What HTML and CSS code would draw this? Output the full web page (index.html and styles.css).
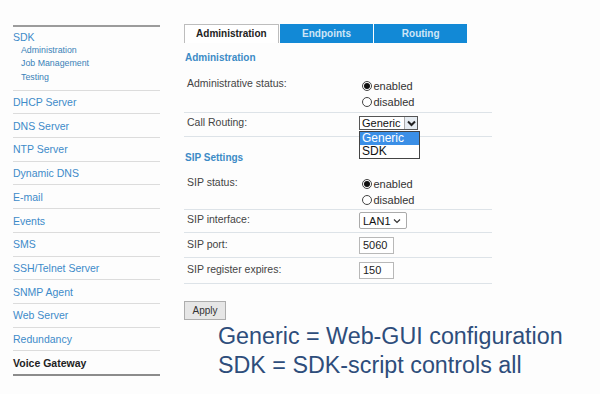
FILE: index.html
```html
<!DOCTYPE html>
<html lang="en">
<head>
    <meta charset="UTF-8">
    <title>Voice Gateway</title>
    <link rel="stylesheet" href="styles.css">
</head>
<body>
    <div class="page">
        <ul class="nav">
            <li class="nav-group">
                <a class="nav-link">SDK</a>
                <a class="nav-sub">Administration</a>
                <a class="nav-sub">Job Management</a>
                <a class="nav-sub">Testing</a>
            </li>
            <li class="nav-item"><a class="nav-link">DHCP Server</a></li>
            <li class="nav-item"><a class="nav-link">DNS Server</a></li>
            <li class="nav-item"><a class="nav-link">NTP Server</a></li>
            <li class="nav-item"><a class="nav-link">Dynamic DNS</a></li>
            <li class="nav-item"><a class="nav-link">E-mail</a></li>
            <li class="nav-item"><a class="nav-link">Events</a></li>
            <li class="nav-item"><a class="nav-link">SMS</a></li>
            <li class="nav-item"><a class="nav-link">SSH/Telnet Server</a></li>
            <li class="nav-item"><a class="nav-link">SNMP Agent</a></li>
            <li class="nav-item"><a class="nav-link">Web Server</a></li>
            <li class="nav-item"><a class="nav-link">Redundancy</a></li>
            <li class="nav-item nav-last"><a class="nav-link nav-current">Voice Gateway</a></li>
        </ul>

        <div class="main">
            <div class="tabs">
                <div class="tab tab-active">Administration</div>
                <div class="tab">Endpoints</div>
                <div class="tab">Routing</div>
            </div>

            <h3 class="section">Administration</h3>
            <div class="row row-admin">
                <div class="label">Administrative status:</div>
                <div class="value radios">
                    <div class="radio-line"><span class="radio checked"></span>enabled</div>
                    <div class="radio-line"><span class="radio"></span>disabled</div>
                </div>
            </div>
            <div class="row row-routing">
                <div class="label">Call Routing:</div>
                <div class="value">
                    <div class="select-open">
                        <span class="select-text">Generic</span>
                        <span class="select-btn">
                            <svg width="9" height="7" viewBox="0 0 9 7"><path d="M1 1.5 L4.5 5 L8 1.5" fill="none" stroke="#222" stroke-width="2"/></svg>
                        </span>
                    </div>
                    <ul class="dropdown">
                        <li class="option option-hl">Generic</li>
                        <li class="option">SDK</li>
                    </ul>
                </div>
            </div>

            <h3 class="section section-sip">SIP Settings</h3>
            <div class="row row-status">
                <div class="label">SIP status:</div>
                <div class="value radios">
                    <div class="radio-line"><span class="radio checked"></span>enabled</div>
                    <div class="radio-line"><span class="radio"></span>disabled</div>
                </div>
            </div>
            <div class="row row-iface">
                <div class="label">SIP interface:</div>
                <div class="value">
                    <div class="select">
                        <span>LAN1</span>
                        <svg width="8" height="6" viewBox="0 0 8 6"><path d="M1 1.5 L4 4.5 L7 1.5" fill="none" stroke="#333" stroke-width="1.2"/></svg>
                    </div>
                </div>
            </div>
            <div class="row row-port">
                <div class="label">SIP port:</div>
                <div class="value"><div class="field">5060</div></div>
            </div>
            <div class="row row-expires">
                <div class="label">SIP register expires:</div>
                <div class="value"><div class="field field-short">150</div></div>
            </div>

            <button class="apply">Apply</button>

            <p class="note">Generic = Web-GUI configuration<br>SDK = SDK-script controls all</p>
        </div>
    </div>
</body>
</html>
```

FILE: styles.css
```css
body {
    margin: 0;
    background: #fdfdfd;
    font-family: "Liberation Sans", Arial, sans-serif;
    color: #444;
}

.page {
    display: flex;
    align-items: flex-start;
    padding: 24px 0 0 13px;
}

/* left menu */
.nav {
    list-style: none;
    margin: 1px 0 0 0;
    padding: 0;
    width: 147px;
    border-top: 2px solid #9c9c9c;
}

.nav-group {
    display: flex;
    flex-direction: column;
    padding: 3px 0 5.7px;
    border-bottom: 1px solid #dcdcdc;
}

.nav-item {
    padding: 4.35px 0;
    border-bottom: 1px solid #dcdcdc;
}

.nav-last {
    border-bottom: 2px solid #8c8c8c;
}

.nav-link {
    display: block;
    font-size: 10.5px;
    line-height: 14px;
    color: #3d8bc9;
}

.nav-current {
    color: #222;
    font-weight: bold;
}

.nav-sub {
    display: block;
    padding-left: 8px;
    font-size: 8.8px;
    line-height: 13.35px;
    color: #3a82b8;
}

/* content */
.main {
    margin-left: 24px;
    width: 308px;
}

.tabs {
    display: flex;
    gap: 1.5px;
    width: 283px;
}

.tab {
    flex: 1;
    height: 19px;
    line-height: 19px;
    text-align: center;
    font-size: 10px;
    font-weight: bold;
    background: #1289d6;
    color: #cfe6f6;
}

.tab-active {
    box-sizing: border-box;
    background: #fff;
    color: #222;
    border: 1px solid #bdbdbd;
    border-bottom: none;
    line-height: 18px;
}

.section {
    margin: 8px 0 0 1px;
    font-size: 10px;
    line-height: 14px;
    font-weight: bold;
    color: #3c8bc6;
}

.section-sip {
    margin-top: 14px;
}

.row {
    display: flex;
    box-sizing: border-box;
    border-bottom: 1px solid #dde3e8;
}

.label {
    width: 175px;
    padding-left: 3px;
    box-sizing: border-box;
    font-size: 10.5px;
    line-height: 14px;
    color: #444;
}

.value {
    position: relative;
    font-size: 11px;
    line-height: 16px;
    color: #333;
}

.row-admin { height: 48px; padding-top: 11px; }
.row-admin .radios { padding-top: 2px; }
.row-routing { height: 24px; padding-top: 2px; }
.row-routing .value { padding-top: 1px; }
.row-status { height: 45px; padding-top: 10px; }
.row-status .radios { padding-top: 1px; }
.row-iface { height: 23px; padding-top: 2px; }
.row-port { height: 25px; padding-top: 4px; }
.row-expires { height: 26px; padding-top: 4px; }

.radio-line {
    display: flex;
    align-items: center;
    padding-left: 3px;
}

.radio {
    width: 10px;
    height: 10px;
    box-sizing: border-box;
    border: 1px solid #444;
    border-radius: 50%;
    margin-right: 1.5px;
    background: #fff;
    display: flex;
    align-items: center;
    justify-content: center;
}

.radio.checked::after {
    content: "";
    width: 6px;
    height: 6px;
    border-radius: 50%;
    background: #111;
}

.select-open {
    display: flex;
    width: 59px;
    height: 14px;
    box-sizing: border-box;
    border: 1px solid #555;
    background: #fff;
    font-size: 11px;
    line-height: 12px;
    color: #111;
}

.select-text {
    flex: 1;
    padding-left: 2px;
}

.select-btn {
    width: 12px;
    border-left: 1px solid #aaa;
    background: #e6ecf2;
    display: flex;
    align-items: center;
    justify-content: center;
}

.dropdown {
    position: absolute;
    left: 0;
    top: 16px;
    margin: 0;
    padding: 0;
    list-style: none;
    width: 61px;
    box-sizing: border-box;
    border: 1px solid #444;
    background: #fff;
    font-size: 12px;
    line-height: 13px;
    color: #111;
}

.option {
    padding-left: 2px;
}

.option-hl {
    background: #3b8fe6;
    color: #fff;
}

.select {
    display: flex;
    align-items: center;
    justify-content: space-between;
    width: 48px;
    height: 17px;
    box-sizing: border-box;
    padding: 0 5px 0 3px;
    border: 1px solid #aaa;
    border-radius: 2px;
    background: #fff;
    font-size: 11px;
    color: #111;
}

.field {
    width: 35px;
    height: 17px;
    box-sizing: border-box;
    padding-left: 3px;
    border: 1px solid #b8b8b8;
    background: #fff;
    font-size: 11px;
    line-height: 15px;
    color: #222;
}

.apply {
    display: block;
    margin-top: 17px;
    width: 42px;
    height: 19px;
    padding: 0;
    border: 1px solid #adadad;
    background: #e6e6e6;
    font-family: inherit;
    font-size: 10px;
    color: #333;
}

.note {
    margin: 2px 0 0 34px;
    width: 380px;
    font-size: 23.3px;
    line-height: 29px;
    color: #2e4d7b;
}
```
